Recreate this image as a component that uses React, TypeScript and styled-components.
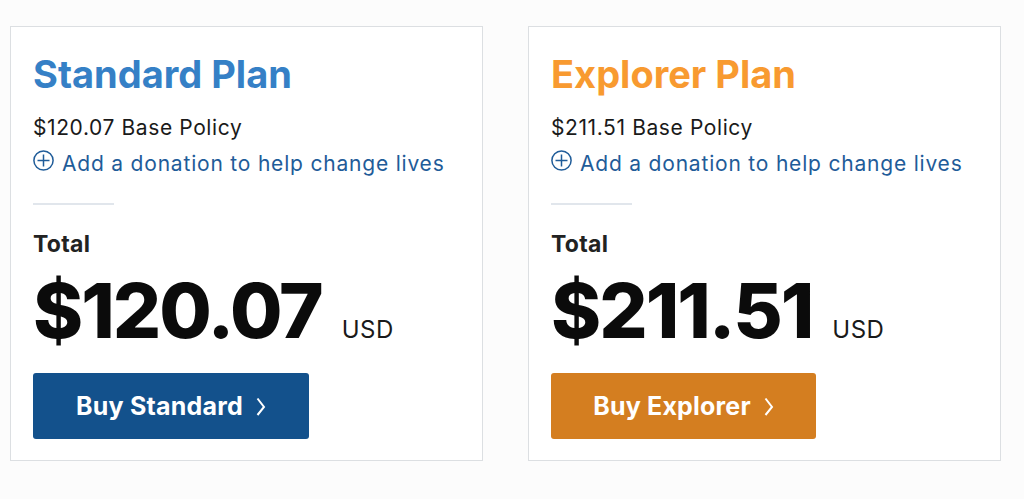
import React from "react";
import styled, { createGlobalStyle } from "styled-components";

const Global = createGlobalStyle`
  html, body { margin: 0; padding: 0; background: #fcfcfc; }
  body { font-family: Inter, "Open Sans", sans-serif; }
`;

const Page = styled.div`
  display: flex;
  gap: 45px;
  padding: 26px 0 0 10px;
  width: 1024px;
  height: 499px;
  box-sizing: border-box;
`;

const Card = styled.div`
  width: 473px;
  height: 435px;
  box-sizing: border-box;
  background: #fff;
  border: 1px solid #dcdfe2;
  padding: 26px 22px 0 22px;
  display: flex;
  flex-direction: column;
`;

const Title = styled.h2<{ $color: string }>`
  margin: 0;
  font-size: 38px;
  font-weight: 700;
  line-height: 42px;
  color: ${(p) => p.$color};
`;

const Base = styled.div`
  margin-top: 21px;
  font-size: 21px;
  line-height: 24px;
  letter-spacing: 0.6px;
  color: #1a1a1a;
`;

const Donate = styled.a`
  display: flex;
  align-items: flex-start;
  gap: 8px;
  margin-top: 12px;
  font-size: 21px;
  line-height: 24px;
  letter-spacing: 0.8px;
  color: #1f5c99;
  text-decoration: none;
  svg { margin-top: -2px; flex-shrink: 0; }
`;

const Divider = styled.hr`
  margin: 27px 0 0 0;
  width: 81px;
  border: none;
  border-top: 2px solid #e1e6ec;
`;

const TotalLabel = styled.div`
  margin-top: 25px;
  font-size: 23px;
  font-weight: 700;
  line-height: 28px;
  letter-spacing: 0.3px;
  color: #222;
`;

const PriceRow = styled.div`
  display: flex;
  align-items: baseline;
  gap: 20px;
  margin-top: 10px;
`;

const Price = styled.div`
  font-size: 76px;
  font-weight: 800;
  line-height: 84px;
  color: #0b0b0b;
  letter-spacing: -2px;
`;

const Currency = styled.span`
  font-size: 24px;
  letter-spacing: 0.5px;
  color: #1a1a1a;
`;

const BuyButton = styled.button<{ $bg: string; $width: number }>`
  margin-top: 21px;
  width: ${(p) => p.$width}px;
  height: 66px;
  background: ${(p) => p.$bg};
  border: none;
  border-radius: 3px;
  color: #fff;
  font-family: Inter, sans-serif;
  font-size: 25px;
  font-weight: 700;
  letter-spacing: 0.2px;
  display: flex;
  align-items: center;
  justify-content: center;
  gap: 12px;
  cursor: pointer;
  padding: 0;
`;

const PlusIcon = () => (
  <svg width="21" height="21" viewBox="0 0 21 21" fill="none" stroke="#1f5c99" strokeWidth="1.5">
    <circle cx="10.5" cy="10.5" r="9.6" />
    <line x1="10.5" y1="4.5" x2="10.5" y2="16.5" />
    <line x1="4.5" y1="10.5" x2="16.5" y2="10.5" />
  </svg>
);

const Chevron = () => (
  <svg width="11" height="20" viewBox="0 0 11 20" fill="none" stroke="#fff" strokeWidth="2">
    <polyline points="2.5,2.5 9,11 2.5,19" />
  </svg>
);

type Plan = {
  name: string;
  color: string;
  base: string;
  total: string;
  btn: string;
  btnColor: string;
  btnWidth: number;
};

const plans: Plan[] = [
  { name: "Standard Plan", color: "#3580c6", base: "$120.07", total: "$120.07", btn: "Buy Standard", btnColor: "#13518c", btnWidth: 276 },
  { name: "Explorer Plan", color: "#f89a30", base: "$211.51", total: "$211.51", btn: "Buy Explorer", btnColor: "#d47e20", btnWidth: 265 },
];

export default function App() {
  return (
    <>
      <Global />
      <Page>
        {plans.map((p) => (
          <Card key={p.name}>
            <Title $color={p.color}>{p.name}</Title>
            <Base>{p.base} Base Policy</Base>
            <Donate href="#">
              <PlusIcon />
              Add a donation to help change lives
            </Donate>
            <Divider />
            <TotalLabel>Total</TotalLabel>
            <PriceRow>
              <Price>{p.total}</Price>
              <Currency>USD</Currency>
            </PriceRow>
            <BuyButton $bg={p.btnColor} $width={p.btnWidth}>
              {p.btn}
              <Chevron />
            </BuyButton>
          </Card>
        ))}
      </Page>
    </>
  );
}
